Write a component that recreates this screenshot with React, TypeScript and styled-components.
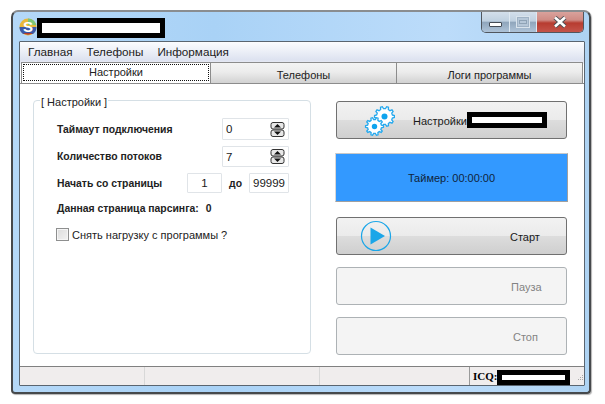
import styled, { createGlobalStyle } from 'styled-components';

const GlobalStyle = createGlobalStyle`
    html, body {
        margin: 0;
        padding: 0;
        background: #ffffff;
    }
    body {
        font-family: "Liberation Sans", Arial, sans-serif;
        font-size: 11px;
        color: #1a1a1a;
    }
`

const Page = styled.div`
    width: 605px;
    height: 404px;
    padding: 10px 0 0 11px;
    box-sizing: border-box;
    overflow: hidden;
`
const Window = styled.div`
    width: 580px;
    height: 384px;
    box-sizing: border-box;
    border: 2px solid #46494c;
    border-top-color: #8a8d90;
    border-radius: 7px 7px 4px 4px;
    background: linear-gradient(90deg, #b4d8f8 0%, #a9d2f6 35%, #bcdcfa 75%, #aed3f3 100%);
    padding: 0 4px 6px 6px;
    display: flex;
    flex-direction: column;
    box-shadow: 1px 1px 1px rgba(0, 0, 0, 0.3);
`
const TitleBar = styled.div`
    height: 29px;
    flex: none;
    display: flex;
    align-items: flex-start;
`
const Logo = styled.svg`
    width: 18px;
    height: 18px;
    margin: 6px 0 0 0;
    flex: none;
`
const Redaction = styled.div<{ $w: number; $h: number; $b: number }>`
    width: ${(p) => p.$w}px;
    height: ${(p) => p.$h}px;
    box-sizing: border-box;
    border: ${(p) => p.$b}px solid #000000;
    background: #ffffff;
    flex: none;
`
const TitleRedaction = styled(Redaction)`
    margin: 6px 0 0 0;
`
const WindowButtons = styled.div`
    margin-left: auto;
    margin-right: 1px;
    display: flex;
    height: 20px;
    border: 1px solid #50565e;
    border-top: none;
    border-radius: 0 0 5px 5px;
    overflow: hidden;
`
const WindowButton = styled.div<{ $w: number; $close?: boolean }>`
    width: ${(p) => p.$w}px;
    display: flex;
    align-items: center;
    justify-content: center;
    border-right: 1px solid ${(p) => (p.$close ? 'transparent' : '#dfe9f2')};
    box-sizing: border-box;
    background: ${(p) =>
        p.$close
            ? 'linear-gradient(180deg, #d9a29c 0%, #cf8b84 40%, #b73c30 55%, #c4544a 100%)'
            : 'linear-gradient(180deg, #d3dfeb 0%, #bfd0e0 45%, #90a6bc 52%, #aec3d8 100%)'};
`
const MinGlyph = styled.div`
    width: 11px;
    height: 3px;
    margin-top: 5px;
    background: #ffffff;
    border: 1px solid #454c55;
    border-radius: 1px;
`
const MaxGlyph = styled.div`
    width: 10px;
    height: 8px;
    background: #b6c7d8;
    border: 1px solid #9fb2c5;
    outline: 1px solid #d9e3ec;
    display: flex;
    align-items: center;
    justify-content: center;
    &::after {
        content: '';
        width: 6px;
        height: 2px;
        border: 1px solid #8fa3b6;
    }
`
const Client = styled.div`
    flex: 1;
    min-height: 0;
    border: 1px solid #5a6570;
    border-radius: 1px;
    background: #ffffff;
    display: flex;
    flex-direction: column;
`
const MenuBar = styled.div`
    height: 18px;
    flex: none;
    box-sizing: border-box;
    padding-left: 8px;
    display: flex;
    gap: 14px;
    align-items: center;
    font-size: 11.7px;
    color: #222222;
    background: linear-gradient(180deg, #fbfcfe 0%, #eef1f8 45%, #dde2f0 100%);
`
const TabStrip = styled.div`
    height: 24px;
    flex: none;
    box-sizing: border-box;
    padding: 2px 1px 0 2px;
    display: flex;
    background: linear-gradient(180deg, #dde2f0 0%, #eceef6 15%, #ffffff 16%);
    border-bottom: 1px solid #8c8c8c;
`
const Tab = styled.div<{ $w: number; $active?: boolean }>`
    width: ${(p) => p.$w}px;
    box-sizing: border-box;
    flex: none;
    border: 1px solid #8c8c8c;
    border-bottom: none;
    margin-left: -1px;
    padding-top: ${(p) => (p.$active ? '0' : '3px')};
    display: flex;
    align-items: ${(p) => (p.$active ? 'stretch' : 'center')};
    justify-content: center;
    color: #222222;
    background: ${(p) =>
        p.$active ? '#ffffff' : 'linear-gradient(180deg, #f3f3f3 0%, #ececec 45%, #d2d2d2 100%)'};
    position: relative;
    z-index: ${(p) => (p.$active ? 1 : 0)};
`
const FocusBox = styled.div`
    flex: 1;
    margin: 1px 1px 2px 1px;
    border: 1px dotted #111111;
    display: flex;
    align-items: center;
    justify-content: center;
    padding-bottom: 2px;
`
const Body = styled.div`
    flex: 1;
    min-height: 0;
    box-sizing: border-box;
    padding: 16px 17px 10px 13px;
    display: flex;
    gap: 25px;
`
const Group = styled.div`
    width: 278px;
    height: 254px;
    box-sizing: border-box;
    border: 1px solid #d5dfe5;
    border-radius: 4px;
    padding: 17px 21px 0 23px;
    position: relative;
    display: flex;
    flex-direction: column;
    gap: 6px;
`
const Legend = styled.div`
    position: absolute;
    top: -5px;
    left: 6px;
    padding: 0 1px;
    background: #ffffff;
    color: #222222;
    font-size: 11px;
`
const Row = styled.div<{ $h: number }>`
    height: ${(p) => p.$h}px;
    display: flex;
    align-items: center;
    font-weight: 700;
    font-size: 10.4px;
    color: #222222;
`
const RowLabel = styled.div`
    margin-right: auto;
`
const Field = styled.div<{ $w: number; $center?: boolean }>`
    width: ${(p) => p.$w}px;
    height: 100%;
    box-sizing: border-box;
    border: 1px solid #e0e4e8;
    border-radius: 1px;
    padding: 0 3px;
    display: flex;
    align-items: center;
    justify-content: ${(p) => (p.$center ? 'center' : 'space-between')};
    font-weight: 400;
    font-size: 11.5px;
    color: #1a1a1a;
`
const SpinIcon = styled.svg`
    width: 15px;
    height: 15px;
    flex: none;
`
const ToWord = styled.div`
    margin: 0 7px;
`
const InfoRow = styled(Row)`
    margin-top: -2px;
    gap: 7px;
`
const CheckRow = styled.div`
    display: flex;
    align-items: center;
    gap: 3px;
    margin: 3px 0 0 -1px;
    font-size: 11px;
    color: #222222;
`
const CheckBox = styled.div`
    width: 13px;
    height: 13px;
    box-sizing: border-box;
    border: 1px solid #8e8f8f;
    background: linear-gradient(135deg, #dcdcdc 0%, #f2f2f2 100%);
    box-shadow: inset 0 0 0 1px #f5f5f5;
`
const RightColumn = styled.div`
    width: 231px;
    flex: none;
    display: flex;
    flex-direction: column;
`
const ActionButton = styled.div<{ $disabled?: boolean; $top: number }>`
    height: 38px;
    flex: none;
    margin-top: ${(p) => p.$top}px;
    box-sizing: border-box;
    border: 1px solid ${(p) => (p.$disabled ? '#adb2b5' : '#707070')};
    border-radius: 3px;
    display: flex;
    align-items: center;
    position: relative;
    color: ${(p) => (p.$disabled ? '#838383' : '#1a1a1a')};
    background: ${(p) =>
        p.$disabled
            ? '#f4f4f4'
            : 'linear-gradient(180deg, #f2f2f2 0%, #ebebeb 49%, #dddddd 50%, #cfcfcf 100%)'};
`
const ButtonIcon = styled.svg<{ $left: number }>`
    flex: none;
    margin-left: ${(p) => p.$left}px;
`
const ButtonText = styled.div<{ $left: number }>`
    margin-left: ${(p) => p.$left}px;
    padding-top: 1px;
`
const TimerPanel = styled.div`
    height: 49px;
    flex: none;
    margin: 14px -1px 0 -1px;
    box-sizing: border-box;
    background: #3399ff;
    border: 1px solid #a0a0a0;
    border-top-color: #c8c8c8;
    border-left-color: #d8d8d8;
    display: flex;
    align-items: center;
    justify-content: center;
    color: #10243a;
`
const StatusBar = styled.div`
    height: 19px;
    flex: none;
    border-top: 1px solid #808080;
    box-sizing: border-box;
    background: #f0eded;
    display: flex;
    align-items: stretch;
`
const StatusCell = styled.div<{ $w: number; $dark?: boolean }>`
    width: ${(p) => p.$w}px;
    flex: none;
    box-sizing: border-box;
    border-right: 1px solid ${(p) => (p.$dark ? '#9a9a9a' : '#d8d8d8')};
`
const IcqCell = styled.div`
    display: flex;
    align-items: center;
    padding-left: 3px;
    font-family: "Liberation Serif", serif;
    font-weight: 700;
    font-size: 11px;
    color: #000000;
`
const IcqRedaction = styled(Redaction)`
    margin: 3px 0 0 0;
`
const Grip = styled.svg`
    margin-left: auto;
    width: 8px;
    height: 18px;
    flex: none;
`

function gearPath(cx: number, cy: number, outer: number, inner: number, teeth: number) {
    const pts: string[] = [];
    for (let i = 0; i < teeth; i++) {
        const a = (i / teeth) * Math.PI * 2;
        const s = Math.PI / teeth / 2;
        [
            [inner, a - s * 1.2],
            [outer, a - s * 0.6],
            [outer, a + s * 0.6],
            [inner, a + s * 1.2],
        ].forEach(([r, t]) => {
            pts.push(`${(cx + r * Math.cos(t)).toFixed(2)} ${(cy + r * Math.sin(t)).toFixed(2)}`);
        });
    }
    return `M${pts.join('L')}Z`;
}

function Gears() {
    return (
        <ButtonIcon $left={26} width="32" height="32" viewBox="0 0 32 32">
            <path d={gearPath(21.5, 12.5, 10, 8, 10)} fill="#ffffff" stroke="#25a9ee" strokeWidth="1.3" />
            <circle cx="21.5" cy="12.5" r="3" fill="#0fa4ee" />
            <path d={gearPath(11.5, 22.5, 9, 7, 10)} fill="#ffffff" stroke="#25a9ee" strokeWidth="1.3" />
            <circle cx="11.5" cy="22.5" r="2.7" fill="#0fa4ee" />
        </ButtonIcon>
    );
}

function Spin() {
    return (
        <SpinIcon viewBox="0 0 15 15">
            <rect x="1" y="0.5" width="13" height="6.5" rx="2" fill="#e8e8e8" stroke="#333333" />
            <path d="M7.5 2 L11 5.5 L4 5.5 Z" fill="#111111" />
            <rect x="1" y="8" width="13" height="6.5" rx="2" fill="#e8e8e8" stroke="#333333" />
            <path d="M7.5 13 L11 9.5 L4 9.5 Z" fill="#111111" />
        </SpinIcon>
    );
}

export default function App() {
    return (
        <Page>
            <GlobalStyle />
            <Window>
                <TitleBar>
                    <Logo viewBox="0 0 18 18">
                        <circle cx="9" cy="9" r="8.5" fill="#e9b83a" />
                        <path d="M9 .5 A8.5 8.5 0 0 1 17.3 7 L9 7 Z" fill="#7cc576" />
                        <path d="M.5 9 H17.5 A8.5 8.5 0 0 1 14 16 L4 16 A8.5 8.5 0 0 1 .5 9 Z" fill="#3a5aa8" />
                        <path d="M4 15 H14 A8.5 8.5 0 0 1 4 15 Z" fill="#b0392f" />
                        <text x="9" y="14" textAnchor="middle" fontFamily="Liberation Sans" fontWeight="700" fontSize="15" fill="#ffffff">S</text>
                    </Logo>
                    <TitleRedaction $w={128} $h={20} $b={5} />
                    <WindowButtons>
                        <WindowButton $w={28}><MinGlyph /></WindowButton>
                        <WindowButton $w={27}><MaxGlyph /></WindowButton>
                        <WindowButton $w={46} $close>
                            <svg width="16" height="12" viewBox="0 0 16 12">
                                <path d="M3 1.5 L13 10.5 M13 1.5 L3 10.5" stroke="#4b4f55" strokeWidth="4.4" />
                                <path d="M3 1.5 L13 10.5 M13 1.5 L3 10.5" stroke="#ffffff" strokeWidth="2.6" />
                            </svg>
                        </WindowButton>
                    </WindowButtons>
                </TitleBar>
                <Client>
                    <MenuBar>
                        <span>Главная</span>
                        <span>Телефоны</span>
                        <span>Информация</span>
                    </MenuBar>
                    <TabStrip>
                        <Tab $w={190} $active>
                            <FocusBox>Настройки</FocusBox>
                        </Tab>
                        <Tab $w={187}>Телефоны</Tab>
                        <Tab $w={187}>Логи программы</Tab>
                    </TabStrip>
                    <Body>
                        <Group>
                            <Legend>[ Настройки ]</Legend>
                            <Row $h={22}>
                                <RowLabel>Таймаут подключения</RowLabel>
                                <Field $w={67}>0<Spin /></Field>
                            </Row>
                            <Row $h={21}>
                                <RowLabel>Количество потоков</RowLabel>
                                <Field $w={67}>7<Spin /></Field>
                            </Row>
                            <Row $h={20}>
                                <RowLabel>Начать со страницы</RowLabel>
                                <Field $w={35} $center>1</Field>
                                <ToWord>до</ToWord>
                                <Field $w={40} $center>99999</Field>
                            </Row>
                            <InfoRow $h={22}>
                                <span>Данная страница парсинга:</span>
                                <span>0</span>
                            </InfoRow>
                            <CheckRow>
                                <CheckBox />
                                Снять нагрузку с программы ?
                            </CheckRow>
                        </Group>
                        <RightColumn>
                            <ActionButton $top={1}>
                                <Gears />
                                <ButtonText $left={18}>Настройки</ButtonText>
                                <Redaction $w={80} $h={16} $b={5} />
                            </ActionButton>
                            <TimerPanel>Таймер: 00:00:00</TimerPanel>
                            <ActionButton $top={15}>
                                <ButtonIcon $left={23} width="32" height="32" viewBox="0 0 32 32">
                                    <circle cx="16" cy="16" r="14.5" fill="none" stroke="#1ba6e8" strokeWidth="1.2" />
                                    <path d="M10.5 7.5 L25 16 L10.5 24.5 Z" fill="#1ba6e8" />
                                </ButtonIcon>
                                <ButtonText $left={118}>Старт</ButtonText>
                            </ActionButton>
                            <ActionButton $top={12} $disabled>
                                <ButtonText $left={174}>Пауза</ButtonText>
                            </ActionButton>
                            <ActionButton $top={12} $disabled>
                                <ButtonText $left={176}>Стоп</ButtonText>
                            </ActionButton>
                        </RightColumn>
                    </Body>
                    <StatusBar>
                        <StatusCell $w={125} />
                        <StatusCell $w={175} />
                        <StatusCell $w={150} $dark />
                        <IcqCell>
                            ICQ:
                            <IcqRedaction $w={73} $h={15} $b={5} />
                        </IcqCell>
                        <Grip viewBox="0 0 8 18">
                            <path d="M6 8h1v1H6zM4 10h1v1H4zM6 10h1v1H6zM2 12h1v1H2zM4 12h1v1H4zM6 12h1v1H6z" fill="#a8a8a8" />
                        </Grip>
                    </StatusBar>
                </Client>
            </Window>
        </Page>
    );
}
